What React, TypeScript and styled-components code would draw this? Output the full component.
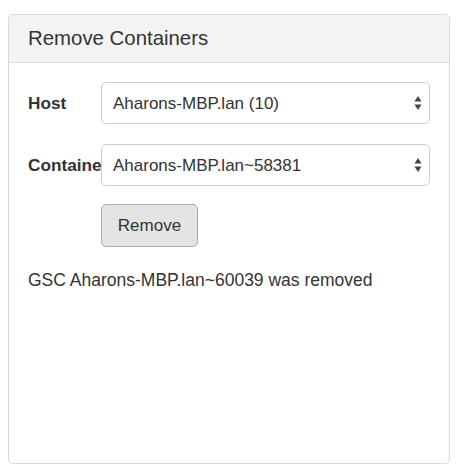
import { styled, createGlobalStyle } from "styled-components";

const GlobalStyle = createGlobalStyle`
  body {
    margin: 0;
    background: #ffffff;
    font-family: "Liberation Sans", Arial, Helvetica, sans-serif;
    color: #333333;
  }
`;

const Panel = styled.div`
  box-sizing: border-box;
  width: 442px;
  height: 450px;
  margin: 14px 0 0 8px;
  border: 1px solid #d9d9d9;
  border-radius: 5px;
  background: #ffffff;
  overflow: hidden;
`;

const Header = styled.div`
  display: flex;
  align-items: center;
  height: 47px;
  padding: 0 19px;
  background: #f3f3f3;
  border-bottom: 1px solid #dcdcdc;
`;

const Title = styled.h3`
  margin: 0;
  font-size: 20.4px;
  font-weight: 400;
  color: #333333;
`;

const Body = styled.div`
  padding: 19px 19px 0 19px;
  display: flex;
  flex-direction: column;
`;

const FormRow = styled.div<{ $gap?: number }>`
  display: grid;
  grid-template-columns: 73px 1fr;
  align-items: center;
  margin-bottom: ${(p) => p.$gap ?? 20}px;
`;

// label column is narrow, long labels get cut off by the select
const Label = styled.label`
  font-size: 17.2px;
  font-weight: 700;
  white-space: nowrap;
  overflow: hidden;
`;

const SelectWrap = styled.div`
  position: relative;
`;

const Select = styled.select`
  box-sizing: border-box;
  width: 100%;
  height: 42px;
  padding: 0 30px 0 11px;
  border: 1px solid #cccccc;
  border-radius: 5px;
  background: #ffffff;
  appearance: none;
  font-family: "Liberation Sans", Arial, Helvetica, sans-serif;
  font-size: 17px;
  color: #333333;
  outline: none;
`;

const Arrows = styled.svg`
  position: absolute;
  right: 8px;
  top: 13px;
  pointer-events: none;
`;

const Button = styled.button`
  box-sizing: border-box;
  height: 43px;
  width: 97px;
  padding: 0;
  border: 1px solid #adadad;
  border-radius: 5px;
  background: #e4e4e4;
  font-family: "Liberation Sans", Arial, Helvetica, sans-serif;
  font-size: 17px;
  color: #333333;
`;

const Message = styled.p`
  margin: 21px 0 0 0;
  font-size: 17.5px;
  line-height: 24px;
  color: #333333;
`;

function Dropdown({ value }: { value: string }) {
  return (
    <SelectWrap>
      <Select defaultValue={value}>
        <option value={value}>{value}</option>
      </Select>
      <Arrows width="8" height="16" viewBox="0 0 8 16">
        <path d="M4 1 L7.5 6.5 L0.5 6.5 Z" fill="#444" />
        <path d="M4 15 L7.5 9.5 L0.5 9.5 Z" fill="#444" />
      </Arrows>
    </SelectWrap>
  );
}

export default function App() {
  return (
    <>
      <GlobalStyle />
      <Panel>
        <Header>
          <Title>Remove Containers</Title>
        </Header>
        <Body>
          <FormRow>
            <Label>Host</Label>
            <Dropdown value="Aharons-MBP.lan (10)" />
          </FormRow>
          <FormRow $gap={18}>
            <Label>Container</Label>
            <Dropdown value="Aharons-MBP.lan~58381" />
          </FormRow>
          <FormRow $gap={0}>
            <span />
            <div>
              <Button>Remove</Button>
            </div>
          </FormRow>
          <Message>GSC Aharons-MBP.lan~60039 was removed</Message>
        </Body>
      </Panel>
    </>
  );
}
